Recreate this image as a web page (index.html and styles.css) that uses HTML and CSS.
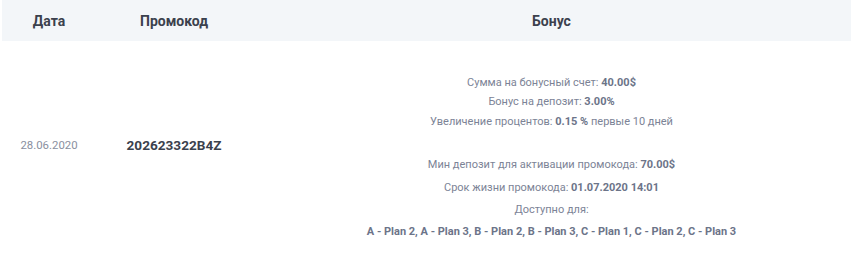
FILE: index.html
```html
<!DOCTYPE html>
<html lang="ru">
<head>
<meta charset="utf-8">
<link rel="stylesheet" href="styles.css">
</head>
<body>
<div class="table">
  <div class="head">
    <div class="c1">Дата</div>
    <div class="c2">Промокод</div>
    <div class="c3">Бонус</div>
  </div>
  <div class="row">
    <div class="c1 date">28.06.2020</div>
    <div class="c2 code">202623322B4Z</div>
    <div class="c3 bonus">
      <div class="group">
        <p>Сумма на бонусный счет: <b>40.00$</b></p>
        <p>Бонус на депозит: <b>3.00%</b></p>
        <p>Увеличение процентов: <b>0.15 %</b> первые 10 дней</p>
      </div>
      <div class="group2">
        <p>Мин депозит для активации промокода: <b>70.00$</b></p>
        <p>Срок жизни промокода: <b>01.07.2020 14:01</b></p>
        <p>Доступно для:</p>
        <p><b>A - Plan 2, A - Plan 3, B - Plan 2, B - Plan 3, C - Plan 1, C - Plan 2, C - Plan 3</b></p>
      </div>
    </div>
  </div>
</div>
</body>
</html>
```
FILE: styles.css
```css
html, body { margin: 0; padding: 0; background: #fff; }
body { font-family: Roboto, "Noto Sans", sans-serif; }
.table { width: 849px; margin-left: 2px; }
.head, .row { display: flex; }
.head { background: #f3f6f9; height: 41px; align-items: center; font-weight: 700; font-size: 14px; color: #3b414d; }
.c1 { width: 94px; text-align: center; }
.c2 { width: 156px; text-align: center; }
.c3 { flex: 1; text-align: center; }
.row { align-items: center; height: 208px; }
.date { font-size: 11.4px; color: #8a90a0; }
.code { font-size: 13.6px; font-weight: 700; color: #3b414d; }
.bonus { align-self: flex-start; padding-top: 32px; font-size: 11px; color: #7c8396; display: flex; flex-direction: column; gap: 23px; }
.bonus b { color: #6c7489; font-weight: 700; }
.bonus p { margin: 0; }
.group p { line-height: 19.4px; }
.group2 p { line-height: 22.4px; }
```
